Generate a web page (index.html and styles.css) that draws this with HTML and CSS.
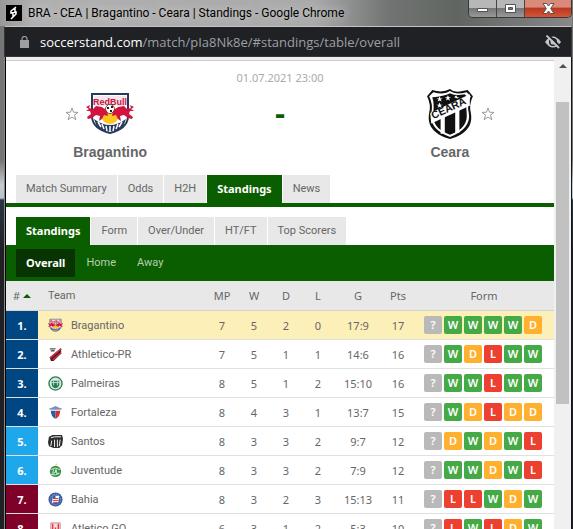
FILE: index.html
```html
<!DOCTYPE html>
<html lang="en">
<head>
    <meta charset="UTF-8">
    <meta name="viewport" content="width=device-width, initial-scale=1">
    <title>BRA - CEA | Bragantino - Ceara | Standings</title>
    <link rel="stylesheet" href="styles.css">
</head>
<body>
    <div class="window">
        <header class="titlebar">
            <svg class="favicon" viewBox="0 0 16 16"><path d="M0 0h16v16H0z" fill="#000"/><path d="M10 2L5 6v2l5-1v2l-5 5M9 3v4M7 8v5" fill="none" stroke="#fff" stroke-width="1.500"/></svg>
            <h1 class="caption">BRA - CEA | Bragantino - Ceara | Standings - Google Chrome</h1>
            <div class="controls">
                <button type="button" aria-label="Minimize"><svg width="13" height="11" viewBox="0 0 13 11"><path d="M1.500 5.500h10v3h-10z" fill="#fff" stroke="#50535a"/></svg></button>
                <button type="button" aria-label="Maximize"><svg width="13" height="11" viewBox="0 0 13 11"><path d="M1.500 1.500h10v8h-10zM4.500 4.500v2h4v-2z" fill="#fff" fill-rule="evenodd" stroke="#50535a"/></svg></button>
                <button type="button" class="close" aria-label="Close"><svg width="13" height="11" viewBox="0 0 13 11"><path d="M1 .5h3.500l2 2.500 2-2.500H12L8.700 5.500 12 10.500H8.500l-2-2.500-2 2.500H1l3.300-5z" fill="#fff" stroke="#555"/></svg></button>
            </div>
        </header>

        <div class="address">
            <svg class="lock" width="9" height="12" viewBox="0 0 9 12"><path d="M0 4h9v8H0z" fill="#9aa0a6"/><path d="M2 5V3a2.500 2.500 0 0 1 5 0v2" fill="none" stroke="#9aa0a6" stroke-width="1.200"/></svg>
            <span class="url"><b>soccerstand.com</b>/match/pIa8Nk8e/#standings/table/overall</span>
            <svg class="eye" width="16" height="14" viewBox="0 0 16 14"><path d="M0 7q8-11 16 0q-8 11-16 0z" fill="#c4c7c9"/><circle cx="8" cy="7" r="3.300" fill="#c4c7c9" stroke="#202124" stroke-width="1.500"/><path d="M3.500 0L15.500 12" stroke="#202124" stroke-width="2"/><path d="M1.500 .5L14 13" stroke="#c4c7c9" stroke-width="1.800"/></svg>
        </div>

        <div class="viewport">
            <main class="page">
                <section class="match">
                    <div class="team">
                        <div class="crest-row home">
                            <button type="button" class="fav" aria-label="Add Bragantino to favourites"><svg width="14" height="14"><path id="star" d="M7 1L8.600 5.300H13L9.500 8.100 10.800 12.700 7 10 3.200 12.700 4.500 8.100 1 5.300H5.400Z" fill="#fff" stroke="#999"/></svg></button>
                            <svg class="crest" viewBox="0 0 48 48">
                                <g id="bragantino">
                                    <path d="M6 4H42V27Q41 39 24 43Q7 39 6 27Z" fill="#fff" stroke="#27395c" stroke-width="2"/>
                                    <path d="M8 6h32v10H8z" fill="#f3e6ec"/>
                                    <text x="24" y="15" font-size="9" font-weight="bold" text-anchor="middle" fill="#c9123d">RedBull</text>
                                    <circle cx="24" cy="25" r="9" fill="#fdc420"/>
                                    <circle cx="24" cy="19" r="4.500" fill="#fff" stroke="#222" stroke-width=".7"/>
                                    <path d="M21 17h2v2h-2zM25 16h2v2h-2zM24 20h2v2h-2z" fill="#222"/>
                                    <path d="M0 17l4-2-1 3 4 1 3-3 6 1 5 4 1 5-4-1-2 4-3 2 1-5-4-1-4 3-4 1-1-2 4-3-1-3-4 0 3-2z" fill="#d2123f"/>
                                    <path d="M48 17l-4-2 1 3-4 1-3-3-6 1-5 4-1 5 4-1 2 4 3 2-1-5 4-1 4 3 4 1 1-2-4-3 1-3 4 0-3-2z" fill="#d2123f"/>
                                    <path d="M8 29Q24 41 40 29L37 37Q24 46 11 37Z" fill="#27395c"/>
                                    <path d="M12 32l3 5M16 34l2 5M20 36l1 5M24 36v6M28 36l-1 5M32 34l-2 5M36 32l-3 5" stroke="#fff" stroke-width="1.500"/>
                                </g>
                            </svg>
                        </div>
                        <a href="#bragantino-team">Bragantino</a>
                    </div>
                    <div class="info">
                        <div class="date">01.07.2021 23:00</div>
                        <div class="score">-</div>
                    </div>
                    <div class="team">
                        <div class="crest-row away">
                            <svg class="crest" viewBox="1 2 46 48">
                                <path d="M24 2Q28 6 36 4L41 3 46 9Q42 17 44 25C46 36 41 45 24 50C7 45 2 36 4 25Q6 17 2 9L7 3Q17 6 24 2Z" fill="#111"/>
                                <path d="M24 4Q29 8 40 5L44 9Q40 17 42 25C44 34 38 43 24 48C10 43 4 34 6 25Q8 17 4 9L8 5Q19 8 24 4Z" fill="#fff"/>
                                <path d="M24 6Q30 9 38 7L41 10Q39 16 40 25C41 34 37 41 24 46C11 41 7 34 8 25Q9 16 7 10Q18 9 24 6Z" fill="#111"/>
                                <path d="M5 25L43 7V18L6 35Z" fill="#fff"/>
                                <path d="M17 27v18M31 21v23" stroke="#fff" stroke-width="4"/>
                                <text x="8" y="31" font-size="10" font-weight="bold" fill="#111" transform="rotate(-25 8 31)">CEARA</text>
                                <path d="M14 9l1 2h2l-2 1 1 2-2-1-2 1 1-2-2-1h2zM22 8l1 2h2l-2 1 1 2-2-1-2 1 1-2-2-1h2zM30 8l1 2h2l-2 1-3-1zM14 15l1 2h2l-2 1 1 2-2-1-2 1 1-2-2-1h2z" fill="#fff"/>
                            </svg>
                            <button type="button" class="fav" aria-label="Add Ceara to favourites"><svg width="14" height="14"><use href="#star"/></svg></button>
                        </div>
                        <a href="#ceara-team">Ceara</a>
                    </div>
                </section>

                <nav class="tabs main-tabs">
                    <a href="#match-summary">Match Summary</a>
                    <a href="#odds">Odds</a>
                    <a href="#h2h">H2H</a>
                    <a href="#standings" class="active">Standings</a>
                    <a href="#news">News</a>
                </nav>
                <nav class="tabs">
                    <a href="#table" class="active">Standings</a>
                    <a href="#form">Form</a>
                    <a href="#over-under">Over/Under</a>
                    <a href="#ht-ft">HT/FT</a>
                    <a href="#top-scorers">Top Scorers</a>
                </nav>
                <nav class="subtabs">
                    <a href="#overall" class="active">Overall</a>
                    <a href="#home">Home</a>
                    <a href="#away">Away</a>
                </nav>

                <table class="standings">
                    <colgroup>
                        <col class="c-rank"><col><col class="c-num"><col class="c-num"><col class="c-num"><col class="c-num"><col class="c-goals"><col class="c-num"><col class="c-form">
                    </colgroup>
                    <thead>
                        <tr><th class="sort"># <i></i></th><th class="name">Team</th><th>MP</th><th>W</th><th>D</th><th>L</th><th>G</th><th>Pts</th><th>Form</th></tr>
                    </thead>
                    <tbody>
                        <tr class="selected">
                            <td class="rank q1">1.</td>
                            <td class="name"><svg viewBox="0 0 48 48"><use href="#bragantino"/></svg>Bragantino</td>
                            <td>7</td><td>5</td><td>2</td><td>0</td><td>17:9</td><td>17</td>
                            <td class="last"><div class="form"><b>?</b><b class="w">W</b><b class="w">W</b><b class="w">W</b><b class="w">W</b><b class="d">D</b></div></td>
                        </tr>
                        <tr>
                            <td class="rank q1">2.</td>
                            <td class="name"><svg viewBox="0 0 16 16"><path d="M2 2h6M3 4h4" stroke="#555" stroke-width="1.500"/><path d="M14 1v6L6 15 3 15 2 11z" fill="#252525"/><path d="M14 2L2 12M14 6L5 14" stroke="#d52a3c" stroke-width="1.800"/></svg>Athletico-PR</td>
                            <td>7</td><td>5</td><td>1</td><td>1</td><td>14:6</td><td>16</td>
                            <td class="last"><div class="form"><b>?</b><b class="w">W</b><b class="d">D</b><b class="l">L</b><b class="w">W</b><b class="w">W</b></div></td>
                        </tr>
                        <tr>
                            <td class="rank q1">3.</td>
                            <td class="name"><svg viewBox="0 0 16 16"><circle cx="8" cy="8" r="7" fill="#d8eadf" stroke="#267b50" stroke-width="1.400"/><path d="M4 5h8v4q0 3-4 4-4-1-4-4z" fill="#267b50"/><path d="M4 7h8M6 5v5M10 5v5" stroke="#c8dfd1"/></svg>Palmeiras</td>
                            <td>8</td><td>5</td><td>1</td><td>2</td><td>15:10</td><td>16</td>
                            <td class="last"><div class="form"><b>?</b><b class="w">W</b><b class="w">W</b><b class="l">L</b><b class="w">W</b><b class="w">W</b></div></td>
                        </tr>
                        <tr>
                            <td class="rank q1">4.</td>
                            <td class="name"><svg viewBox="0 0 16 16"><path d="M1 4l3-1 4-2 4 2 3 1-2 2H3z" fill="#7a91b8"/><path d="M3 6h5v9Q3 12 3 6z" fill="#235ead"/><path d="M8 6h5q0 6-5 9z" fill="#d92c35"/><path d="M2 5.500h12" stroke="#fff"/></svg>Fortaleza</td>
                            <td>8</td><td>4</td><td>3</td><td>1</td><td>13:7</td><td>15</td>
                            <td class="last"><div class="form"><b>?</b><b class="w">W</b><b class="d">D</b><b class="l">L</b><b class="d">D</b><b class="d">D</b></div></td>
                        </tr>
                        <tr>
                            <td class="rank q2">5.</td>
                            <td class="name"><svg viewBox="0 0 16 16"><path d="M0 9l1-6 4-2 10 0 1 4-1 7-3 3H6l-5-2z" fill="#2b2b2b"/><path d="M4 7l-1 6M7 6v8M10 6v8M13 6l-1 7M3 4l4-1 7 0" fill="none" stroke="#fff"/></svg>Santos</td>
                            <td>8</td><td>3</td><td>3</td><td>2</td><td>9:7</td><td>12</td>
                            <td class="last"><div class="form"><b>?</b><b class="d">D</b><b class="w">W</b><b class="d">D</b><b class="w">W</b><b class="l">L</b></div></td>
                        </tr>
                        <tr>
                            <td class="rank q2">6.</td>
                            <td class="name"><svg viewBox="0 0 16 16"><circle cx="9" cy="1.500" r="1" fill="#f0d84c"/><circle cx="8" cy="9" r="6" fill="#379149"/><path d="M3 7q5-3 10 0M3 12q5 2 9-1M6 7l-1 4 3-1V7M9 7v4h3" fill="none" stroke="#d9eddd"/></svg>Juventude</td>
                            <td>8</td><td>3</td><td>3</td><td>2</td><td>7:9</td><td>12</td>
                            <td class="last"><div class="form"><b>?</b><b class="w">W</b><b class="w">W</b><b class="d">D</b><b class="w">W</b><b class="l">L</b></div></td>
                        </tr>
                        <tr>
                            <td class="rank q3">7.</td>
                            <td class="name"><svg viewBox="0 0 16 16"><circle cx="8" cy="8" r="7.500" fill="#365ca0"/><circle cx="8" cy="8" r="5.500" fill="none" stroke="#9db2d8" stroke-dasharray="1"/><path d="M5 4h7l-1 7-7 1z" fill="#fff"/><path d="M5 7h6M5 9h6M5 11h5" stroke="#d83442"/><path d="M5 4h3v3H5z" fill="#365ca0"/></svg>Bahia</td>
                            <td>8</td><td>3</td><td>2</td><td>3</td><td>15:13</td><td>11</td>
                            <td class="last"><div class="form"><b>?</b><b class="l">L</b><b class="l">L</b><b class="w">W</b><b class="d">D</b><b class="w">W</b></div></td>
                        </tr>
                        <tr>
                            <td class="rank q3">8.</td>
                            <td class="name"><svg viewBox="0 0 16 16"><path d="M3 2h10v8q-1 3-5 5-4-2-5-5z" fill="#f6dcdd" stroke="#c9898d"/><path d="M5 3v8M8 7v7M11 3v8" stroke="#d93c43" stroke-width="1.500"/></svg>Atletico GO</td>
                            <td>6</td><td>3</td><td>1</td><td>2</td><td>5:3</td><td>10</td>
                            <td class="last"><div class="form"><b>?</b><b class="l">L</b><b class="w">W</b><b class="l">L</b><b class="d">D</b><b class="w">W</b></div></td>
                        </tr>
                    </tbody>
                </table>
            </main>
            <div class="scrollbar"><i class="up"></i><div class="thumb"></div></div>
        </div>
    </div>
</body>
</html>
```

FILE: styles.css
```css
* {
    box-sizing: border-box;
}
body {
    margin: 0;
    background: #222;
    font-family: "Noto Sans", Tahoma, sans-serif;
    font-size: 11px;
    color: #666;
}
a {
    color: inherit;
    text-decoration: none;
}
button {
    padding: 0;
    border: 0;
    background: none;
    cursor: pointer;
}

/* window frame */
.window {
    display: flex;
    flex-direction: column;
    height: 100vh;
    overflow: hidden;
    padding: 0 1px 0 4px;
    background: linear-gradient(#777 0, #747474 160px, #c5cace 185px, #b9c2c6 198px, #263743 200px, #242a2e 230px, #202024 250px);
}
.titlebar {
    display: flex;
    flex: none;
    align-items: center;
    height: 26px;
    margin-left: -4px;
    padding-left: 6px;
    background: linear-gradient(90deg, #999 0, #b0b0b0 6%, #a9a9a9 55%, #717472 68%, #606562 80%, #888 100%);
}
.favicon {
    width: 16px;
    height: 16px;
}
.caption {
    flex: 1;
    margin: 0 0 0 6px;
    font: 12px Roboto, "Segoe UI", sans-serif;
    color: #000;
    white-space: nowrap;
    text-shadow: 0 0 8px #ddd;
}
.controls {
    display: flex;
    align-self: flex-start;
    height: 18px;
    border: 1px solid #393939;
    border-top: 0;
    border-radius: 0 0 5px 5px;
    overflow: hidden;
}
.controls button {
    display: flex;
    align-items: center;
    justify-content: center;
    width: 28px;
    border-right: 1px solid #454545;
    background: linear-gradient(#b7b7b7 45%, #777 50%, #999);
}
.controls .close {
    width: 46px;
    border: 0;
    background: linear-gradient(#d98a7b 40%, #b93a20 50%, #d5553a);
}
.address {
    display: flex;
    flex: none;
    align-items: center;
    height: 31px;
    padding: 0 10px 0 15px;
    border: 1px solid #35363a;
    border-top: 1px solid #c4c4c4;
    background: #202124;
}
.url {
    flex: 1;
    margin-left: 11px;
    font: 13px "Open Sans", "Segoe UI", sans-serif;
    color: #9aa0a6;
    white-space: nowrap;
}
.url b {
    font-weight: normal;
    color: #fff;
}
.viewport {
    display: flex;
    flex: 1;
    min-height: 0;
    border-left: 2px ridge #333;
    border-right: 1px solid #17171b;
}
.page {
    flex: 1;
    overflow: hidden;
    border-top: 3px solid #f4eef2;
    background: #fff;
}

/* match header */
.match {
    display: grid;
    grid-template-columns: 38% 24% 38%;
    height: 115px;
    border-top: 1px solid #ccc;
    text-align: center;
}
.team {
    padding-top: 28px;
}
.team > a {
    display: block;
    margin-top: 3px;
    font: bold 14px/20px "Liberation Sans", Arial, sans-serif;
}
.crest-row {
    display: grid;
    grid-template-columns: 1fr 48px 1fr;
    gap: 7px;
    align-items: center;
}
.crest {
    grid-column: 2;
    width: 48px;
    height: 50px;
    font-family: "Liberation Sans", Arial, sans-serif;
}
.fav {
    display: flex;
}
.home .fav {
    justify-content: flex-end;
}
.date {
    padding-top: 9px;
    line-height: 16px;
    color: #aaa;
}
.score {
    margin-top: 7px;
    font: bold 32px/40px "Liberation Sans", Arial, sans-serif;
    color: #0a5e00;
}

/* tabs */
.tabs,
.subtabs {
    display: flex;
    gap: 1px;
    padding: 0 10px;
    font-family: Roboto, Tahoma, sans-serif;
}
.main-tabs {
    margin-bottom: 10px;
    border-bottom: 4px solid #0a5e00;
}
.tabs a,
.subtabs a {
    padding: 0 10px;
    line-height: 28px;
    white-space: nowrap;
}
.tabs a {
    background: #e8e8e8;
}
.tabs a.active,
.subtabs a.active {
    background: #0a5e00;
    color: #fff;
    font-family: "Noto Sans", Tahoma, sans-serif;
    font-weight: bold;
}
.subtabs {
    padding: 4px 10px;
    background: #0a5e00;
    color: #b5cfb2;
}
.subtabs a.active {
    background: #073400;
}

/* standings table */
.standings {
    width: 100%;
    table-layout: fixed;
    border-spacing: 0;
    text-align: center;
}
.c-rank,
.c-num {
    width: 32px;
}
.c-goals {
    width: 48px;
}
.c-form {
    width: 140px;
}
.standings th,
.standings td {
    height: 29px;
    padding: 1px 0 0;
    border-bottom: 1px solid #e0e0e0;
    line-height: 16px;
}
.standings th {
    height: 30px;
    border-color: #d4d4d4;
    background: #e8e8e8;
    font-weight: normal;
}
.sort i {
    display: inline-block;
    margin-bottom: 2px;
    border: 4px solid transparent;
    border-top: 0;
    border-bottom-color: #0a5e00;
}
.standings .name {
    padding-left: 10px;
    font-family: Roboto, Tahoma, sans-serif;
    text-align: left;
}
.name svg {
    width: 15px;
    height: 15px;
    margin-right: 8px;
    font-family: "Liberation Sans", Arial, sans-serif;
    vertical-align: -4px;
}
.selected td {
    background: #fcefb8;
}
.standings .rank {
    color: #fff;
    font-weight: bold;
}
.standings .q1 {
    background: #004682;
}
.standings .q2 {
    background: #1fa7ec;
}
.standings .q3 {
    background: #7f0029;
}
.standings .last {
    padding: 0 2px 0 0;
}
.form {
    display: flex;
    justify-content: center;
    gap: 2px;
}
.form b {
    width: 18px;
    border-radius: 2px;
    background: #b9b9b9;
    color: #fff;
    font-weight: 600;
    line-height: 18px;
}
.form .w {
    background: #45a945;
}
.form .d {
    background: #ffb02e;
}
.form .l {
    background: #ec4030;
}

/* scrollbar */
.scrollbar {
    display: flex;
    flex-direction: column;
    width: 17px;
    padding: 0 2px;
    background: #f0f0f0;
}
.up {
    align-self: center;
    margin: 7px 0 34px;
    border: 4px solid transparent;
    border-top: 0;
    border-bottom-color: #505050;
}
.thumb {
    height: 64%;
    background: #c1c1c1;
}
```
